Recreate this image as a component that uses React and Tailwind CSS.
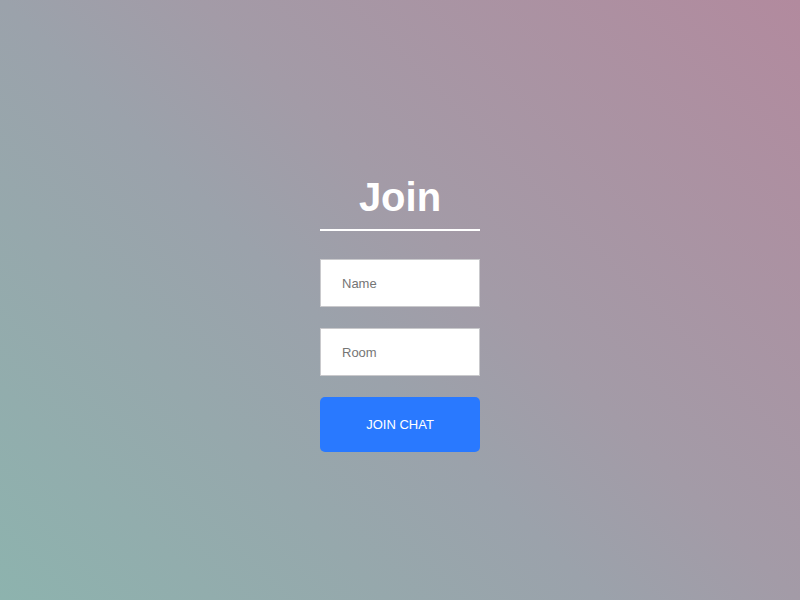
export default function App() {
  return (
    <div
      className="w-[800px] h-[600px] overflow-hidden bg-[linear-gradient(45deg,#8db3ae_0%,#9ba2ab_43%,#a39ba7_57%,#b28a9e_100%)] flex justify-center"
      style={{ fontFamily: '"Liberation Sans", Arial, sans-serif' }}
    >
      <div className="w-[160px] pt-[173px] flex flex-col">
        <h1 className="text-[40px] leading-[48px] font-bold text-white text-center pb-[8px] border-b-2 border-white">
          Join
        </h1>
        <input
          className="mt-[28px] h-[48px] w-full bg-white border border-[#c9c9cc] pl-[21px] text-[13px] text-[#333] placeholder:text-[#757575] outline-none"
          placeholder="Name"
        />
        <input
          className="mt-[21px] h-[48px] w-full bg-white border border-[#c9c9cc] pl-[21px] text-[13px] text-[#333] placeholder:text-[#757575] outline-none"
          placeholder="Room"
        />
        <button className="mt-[21px] h-[55px] w-full bg-[#2979ff] rounded-[5px] text-white text-[13px]">
          JOIN CHAT
        </button>
      </div>
    </div>
  );
}
